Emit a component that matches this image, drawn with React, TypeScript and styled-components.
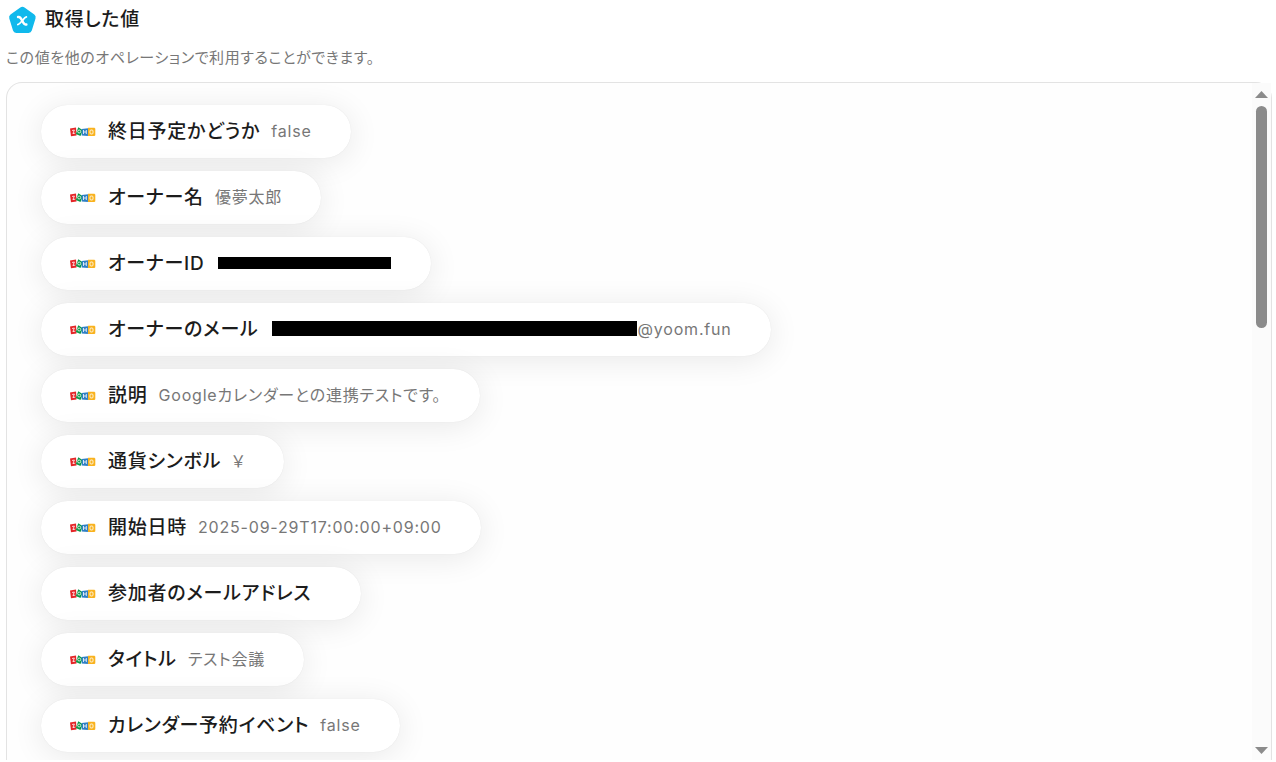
import React from 'react';
import styled, { createGlobalStyle } from 'styled-components';

const GlobalStyle = createGlobalStyle`
  *, *::before, *::after { box-sizing: border-box; }
  html, body, #root { height: 100%; }
  body {
    margin: 0;
    background: #fff;
    color: #1c1c1c;
    font-family: Inter, "Noto Sans CJK JP", sans-serif;
    font-feature-settings: "palt";
    overflow: hidden;
  }
`;

const Page = styled.main`
  display: flex;
  flex-direction: column;
  height: 100vh;
  padding: 4px 4px 2px 6px;
`;

const Header = styled.header`
  display: flex;
  align-items: center;
  gap: 8px;
  height: 32px;
  padding-left: 2px;
`;

const Title = styled.h1`
  margin: 0;
  font-size: 19px;
  line-height: 28px;
  font-weight: 500;
  letter-spacing: 0.04em;
`;

const Lead = styled.p`
  margin: 12px 0 14px;
  font-size: 15px;
  line-height: 20px;
  color: #777;
  letter-spacing: 0.04em;
`;

const Panel = styled.section`
  display: flex;
  flex: 1;
  min-height: 0;
  border: 1px solid #e3e3e3;
  border-bottom: 0;
  border-radius: 16px 16px 0 0;
  background: #fefefe;
`;

const List = styled.ul`
  display: flex;
  flex: 1;
  flex-direction: column;
  align-items: flex-start;
  gap: 13px;
  min-width: 0;
  margin: 0;
  padding: 22px 34px;
  overflow: hidden;
  border-top-left-radius: 15px;
  list-style: none;
`;

const Chip = styled.li`
  display: flex;
  flex: none;
  align-items: center;
  height: 53px;
  padding: 0 39px 0 29px;
  border-radius: 27px;
  background: #fff;
  box-shadow: 0 4px 32px rgba(0, 0, 0, 0.09), 0 0 1px rgba(0, 0, 0, 0.1);
  white-space: nowrap;
`;

const Label = styled.span`
  margin: 0 11px;
  font-size: 19px;
  line-height: 28px;
  font-weight: 500;
  letter-spacing: 0.04em;
`;

const Value = styled.span`
  display: flex;
  align-items: center;
  margin-bottom: 2px;
  font-size: 16px;
  line-height: 24px;
  color: #777;
  letter-spacing: 0.05em;
`;

const Redaction = styled.span<{ $width: number; $height: number }>`
  width: ${(p) => p.$width}px;
  height: ${(p) => p.$height}px;
  margin: 0 1px 0 2px;
  background: #000;
`;

const Scrollbar = styled.div`
  display: flex;
  flex: none;
  flex-direction: column;
  align-items: center;
  width: 19px;
  padding: 8px 2px 6px;
  background: #fbfbfb;
`;

const Track = styled.div`
  flex: 1;
  width: 11px;
  margin: 8px 0;
`;

const Thumb = styled.div`
  height: 35%;
  border-radius: 6px;
  background: #8b8b8b;
`;

const VariableIcon = () => (
  <svg width="29" height="30" viewBox="0 0 29 30" aria-hidden="true">
    <path
      d="M12.3 2.6a3.4 3.4 0 0 1 4.2 0l9.8 7a3.4 3.4 0 0 1 1.2 3.8l-3.7 12.2a3.4 3.4 0 0 1-3.3 2.4H8.3a3.4 3.4 0 0 1-3.3-2.4L1.3 13.4a3.4 3.4 0 0 1 1.2-3.8Z"
      fill="#10b9ec"
    />
    <path
      d="M10 12h.8c1.600 0 2.200 1.200 3.300 3.600s1.900 3.900 3.300 3.900h1"
      fill="none"
      stroke="#fff"
      strokeWidth="2.400"
      strokeLinecap="round"
    />
    <path
      d="M18.400 11.900c-1.400.3-2.100 1.300-4.100 3.800s-2.800 3.600-4.500 3.900"
      fill="none"
      stroke="#fff"
      strokeWidth="1.700"
      strokeLinecap="round"
    />
  </svg>
);

const ZohoIcon = () => (
  <svg width="27" height="12" viewBox="0 0 27 12" aria-hidden="true">
    <path d="M0 2.500l6-1 .5 8L1 10.300z" fill="#e42527" />
    <path d="M8.300 1.200l4.500 3-2.300 5.800-4.700-2z" fill="#089949" />
    <path d="M11.700 3l6.400-.7-.2 7.700-6.200-.5z" fill="#2f7fc4" />
    <path d="M18 1.800h6.500l.8 1v6.500l-.8.700H18z" fill="#f9b21d" />
    <g fill="none" stroke="#fff" strokeOpacity=".8">
      <path d="M2 4.500l2.400-.5-1.500 3.600 2.400-.5" />
      <circle cx="9.200" cy="5.500" r="1.500" />
      <path d="M13.500 4v4M16.300 4v4M13.500 6h2.800" />
      <rect x="20" y="4" width="3" height="4" rx="1" />
    </g>
  </svg>
);

type Item = { label: string; value?: string; mask?: [number, number] };

const items: Item[] = [
  { label: '終日予定かどうか', value: 'false' },
  { label: 'オーナー名', value: '優夢太郎' },
  { label: 'オーナーID', mask: [173, 12] },
  { label: 'オーナーのメール', value: '@yoom.fun', mask: [365, 15] },
  { label: '説明', value: 'Googleカレンダーとの連携テストです。' },
  { label: '通貨シンボル', value: '￥' },
  { label: '開始日時', value: '2025-09-29T17:00:00+09:00' },
  { label: '参加者のメールアドレス', value: '' },
  { label: 'タイトル', value: 'テスト会議' },
  { label: 'カレンダー予約イベント', value: 'false' },
];

export default function App() {
  return (
    <Page lang="ja">
      <GlobalStyle />
      <Header>
        <VariableIcon />
        <Title>取得した値</Title>
      </Header>
      <Lead>この値を他のオペレーションで利用することができます。</Lead>
      <Panel>
        <List>
          {items.map((item) => (
            <Chip key={item.label}>
              <ZohoIcon />
              <Label>{item.label}</Label>
              <Value>
                {item.mask && <Redaction $width={item.mask[0]} $height={item.mask[1]} />}
                {item.value}
              </Value>
            </Chip>
          ))}
        </List>
        <Scrollbar aria-hidden="true">
          <svg width="13" height="7" viewBox="0 0 13 7">
            <path d="M0 7L6.500 0L13 7Z" fill="#8b8b8b" />
          </svg>
          <Track>
            <Thumb />
          </Track>
          <svg width="13" height="7" viewBox="0 0 13 7">
            <path d="M0 0L6.500 7L13 0Z" fill="#8b8b8b" />
          </svg>
        </Scrollbar>
      </Panel>
    </Page>
  );
}
